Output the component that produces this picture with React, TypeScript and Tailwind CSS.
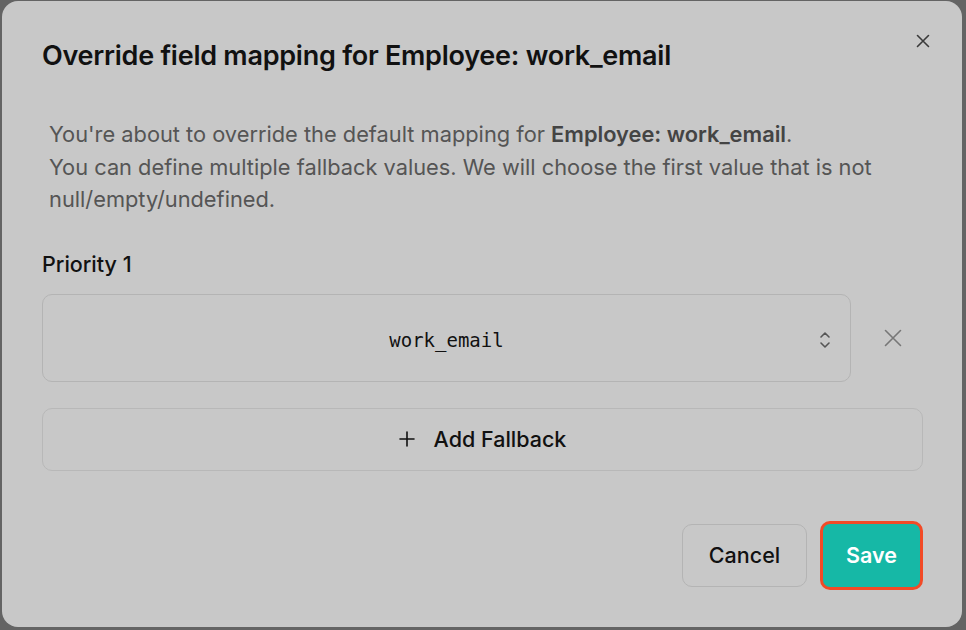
import React from "react";

const font = { fontFamily: "Inter, 'Noto Sans', sans-serif" };

export default function App() {
  return (
    <div className="w-[966px] h-[630px] bg-[#646464] pt-[1px] pl-[2px] overflow-hidden" style={font}>
      <div className="relative w-[960px] h-[626px] bg-[#c8c8c8] rounded-[16px] pl-[40px] pr-[40px] pt-[38px]">
        <button className="absolute left-[912px] top-[31px] w-[18px] h-[18px] flex items-center justify-center text-[#3a3a3a]">
          <svg width="14" height="14" viewBox="0 0 14 14" fill="none" stroke="currentColor" strokeWidth="1.6" strokeLinecap="round">
            <path d="M1.5 1.5 L12.5 12.5 M12.5 1.5 L1.5 12.5" />
          </svg>
        </button>
        <h2 className="text-[27px] leading-[34px] font-semibold text-[#111] tracking-[-0.25px]">
          Override field mapping for Employee: work_email
        </h2>
        <p className="mt-[45px] pl-[7px] text-[21.8px] leading-[32.5px] text-[#555] whitespace-nowrap">
          You're about to override the default mapping for <span className="font-semibold text-[#444]">Employee: work_email</span>.
          <br />
          You can define multiple fallback values. We will choose the first value that is not
          <br />
          null/empty/undefined.
        </p>
        <div className="mt-[33px] text-[21.5px] leading-[30px] font-medium text-[#111]">Priority 1</div>
        <div className="mt-[15px] flex items-center">
          <div className="relative w-[809px] h-[88px] border border-[#b4b4b4] rounded-[10px] flex items-center justify-center">
            <span className="text-[19px] leading-[24px] text-[#111] mt-[4px]" style={{ fontFamily: "'DejaVu Sans Mono', monospace" }}>work_email</span>
            <svg className="absolute right-[19px] top-[36px]" width="12" height="18" viewBox="0 0 12 18" fill="none" stroke="#555" strokeWidth="1.6" strokeLinecap="round" strokeLinejoin="round">
              <path d="M2 6 L6 2 L10 6" />
              <path d="M2 12 L6 16 L10 12" />
            </svg>
          </div>
          <button className="ml-[33px] w-[18px] h-[18px] text-[#777]">
            <svg width="18" height="18" viewBox="0 0 18 18" fill="none" stroke="currentColor" strokeWidth="1.6" strokeLinecap="round">
              <path d="M1.5 1.5 L16.5 16.5 M16.5 1.5 L1.5 16.5" />
            </svg>
          </button>
        </div>
        <button className="mt-[26px] w-[881px] h-[63px] border border-[#b8b8b8] rounded-[10px] flex items-center justify-center gap-[19px] text-[21.5px] font-medium text-[#111]">
          <svg width="16" height="16" viewBox="0 0 16 16" fill="none" stroke="currentColor" strokeWidth="1.6" strokeLinecap="round">
            <path d="M8 1 V15 M1 8 H15" />
          </svg>
          <span>Add Fallback</span>
        </button>
        <div className="mt-[50px] flex justify-end items-center gap-[13px] mr-[-1px]">
          <button className="w-[125px] h-[63px] border border-[#b4b4b4] rounded-[10px] text-[21.5px] font-medium text-[#111]">
            Cancel
          </button>
          <button className="w-[103px] h-[69px] bg-[#16b8a6] border-[3px] border-[#f24a26] rounded-[10px] text-[21.5px] font-semibold text-white">
            Save
          </button>
        </div>
      </div>
    </div>
  );
}
